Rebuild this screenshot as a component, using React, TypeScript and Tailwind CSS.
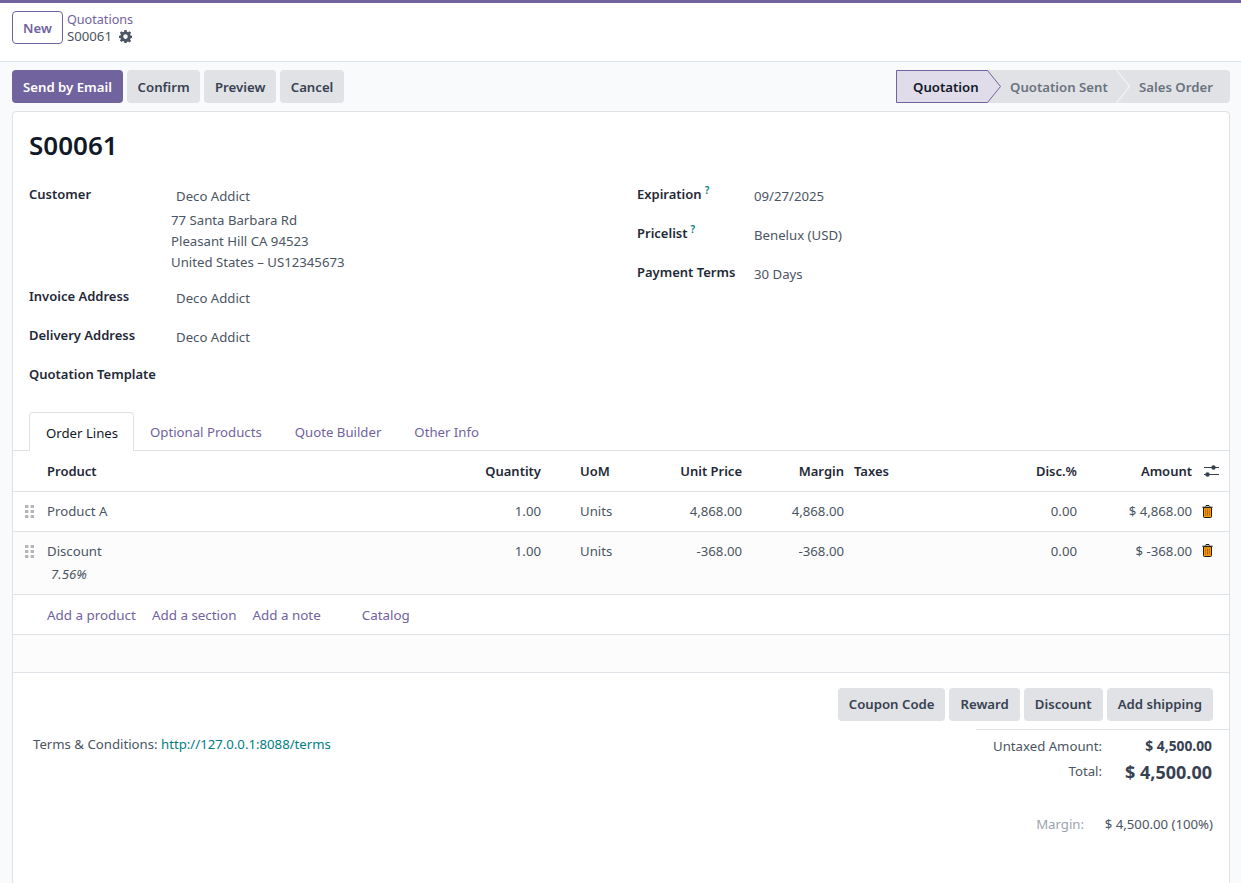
import React from "react";

const F = '[font-family:"Noto_Sans",sans-serif]';

function Btn({ children, primary, tight }: { children: React.ReactNode; primary?: boolean; tight?: boolean }) {
  return (
    <button
      className={`h-[33px] pt-[2px] rounded font-semibold text-[13.2px] ${tight ? "px-[10.7px]" : "px-[11px]"} ${
        primary ? "bg-[#71639e] text-white" : "bg-[#e0e2e6] text-[#374151]"
      }`}
    >
      {children}
    </button>
  );
}

function Field({ label, help, children, h }: { label: string; help?: boolean; children?: React.ReactNode; h: string }) {
  return (
    <div className={`flex ${h}`}>
      <div className="w-[143px] shrink-0 pt-[3px] font-semibold text-[13px] text-[#1f2937] leading-[20px] whitespace-nowrap">
        {label}
        {help && <sup className="ml-[3px] text-[#017e84] font-semibold text-[10px]">?</sup>}
      </div>
      <div className="pl-[4px] pt-[5px] leading-[20px] text-[#4b5563]">{children}</div>
    </div>
  );
}

function Grip() {
  return (
    <svg width="10" height="13" viewBox="0 0 10 13" className="ml-[12px] fill-[#b4b6ba]">
      <rect x="0" y="0" width="3.4" height="3" />
      <rect x="5.6" y="0" width="3.4" height="3" />
      <rect x="0" y="5" width="3.4" height="3" />
      <rect x="5.6" y="5" width="3.4" height="3" />
      <rect x="0" y="10" width="3.4" height="3" />
      <rect x="5.6" y="10" width="3.4" height="3" />
    </svg>
  );
}

function Trash() {
  return (
    <svg width="11" height="13" viewBox="0 0 11 13" className="ml-[10px]">
      <path d="M3.5 1.5 L4 .5 H7 L7.5 1.5 M.3 2.2 H10.7" fill="none" stroke="#1a1a1a" strokeWidth="1" />
      <path d="M1.5 2.6 H9.5 V11.6 Q9.5 12.5 8.6 12.5 H2.4 Q1.5 12.5 1.5 11.6 Z" fill="#f59e0b" stroke="#1a1a1a" strokeWidth="1" />
      <path d="M3.7 4.5 V10.8 M5.5 4.5 V10.8 M7.3 4.5 V10.8" stroke="#b45309" strokeWidth=".8" />
    </svg>
  );
}

function Sliders() {
  return (
    <svg width="15" height="12" viewBox="0 0 15 12" className="ml-[12px]">
      <path d="M0 2.5 H15 M0 9.5 H15" stroke="#374151" strokeWidth="1" />
      <circle cx="9.5" cy="2.5" r="2.2" fill="#374151" />
      <circle cx="3.5" cy="9.5" r="2.2" fill="#374151" />
    </svg>
  );
}

function Gear() {
  return (
    <svg width="13" height="13" viewBox="0 0 24 24" className="ml-[7px]">
      <path
        fill="#4b5563"
        fillRule="evenodd"
        d="M10 0h4l.6 3.2 2.2.9L19.5 2.3l2.8 2.8-1.8 2.7.9 2.2L24 10.6v4l-2.6.6-.9 2.2 1.8 2.7-2.8 2.8-2.7-1.8-2.2.9L14 24h-4l-.6-2.6-2.2-.9-2.7 1.8-2.8-2.8 1.8-2.7-.9-2.2L0 14.6v-4l2.6-.6.9-2.2L1.7 5.1l2.8-2.8 2.7 1.8 2.2-.9zM12 8a4.2 4.2 0 1 0 0 8.4A4.2 4.2 0 0 0 12 8z"
      />
    </svg>
  );
}

const thR = "pt-[2px] text-right font-semibold text-[13px] text-[#1f2937]";
const thL = "pt-[2px] text-left font-semibold text-[13px] text-[#1f2937]";
const row1R = "pt-[2px] text-right text-[#4b5563]";
const row2R = "pt-[9px] leading-[20px] text-right text-[#4b5563]";

export default function App() {
  return (
    <div className={`${F} relative text-[13.2px] h-[883px] overflow-hidden bg-[#f9fafb] text-[#374151] border-t-[3px] border-[#71639e]`}>
      <div className="absolute -top-[1px] left-0 w-[91px] h-[1px] bg-[#b8b1cf]"></div>
      <header className="h-[59px] bg-white border-b border-[#dee2e6] flex items-start pl-[12px] pt-[8px]">
        <button className="w-[51px] h-[33px] pt-[2px] rounded border border-[#71639e] text-[#71639e] font-semibold">New</button>
        <div className="ml-[4px]">
          <div className="text-[#71639e] text-[12.6px] leading-[17px]">Quotations</div>
          <div className="flex items-center leading-[17px] text-[#4b5563]">
            S00061
            <Gear />
          </div>
        </div>
      </header>

      <div className="flex items-start justify-between pl-[12px] pr-[11px] pt-[8px] h-[49px]">
        <div className="flex gap-[4px]">
          <Btn primary>Send by Email</Btn>
          <Btn tight>Confirm</Btn>
          <Btn tight>Preview</Btn>
          <Btn tight>Cancel</Btn>
        </div>
        <div className="relative flex h-[33px] w-[334px] rounded-r-sm bg-[#e0e2e6] font-semibold">
          <div className="absolute left-0 top-0 h-[33px] w-[108px]">
            <svg width="108" height="33" viewBox="0 0 108 33">
              <path d="M.5 .5 H91.5 L104.5 16.5 L91.5 32.5 H.5 Z" fill="#e0dcea" stroke="#71639e" />
            </svg>
          </div>
          <svg width="17" height="33" viewBox="0 0 17 33" className="absolute left-[220px] top-0">
            <path d="M.5 0 L13.5 16.5 L.5 33" fill="none" stroke="#f3f4f6" strokeWidth="1.2" />
          </svg>
          <span className="relative w-[114px] pl-[17px] leading-[35px] text-[#111827]">Quotation</span>
          <span className="relative w-[129px] leading-[35px] text-[#6b7280]">Quotation Sent</span>
          <span className="relative leading-[35px] text-[#6b7280]">Sales Order</span>
        </div>
      </div>

      <main className="ml-[12px] mr-[11px] h-[790px] bg-white border border-[#dee2e6] rounded-t">
        <h1 className="pl-[16px] pt-[13px] h-[69px] text-[26px] font-semibold leading-[40px] text-[#111827]">S00061</h1>

        <div className="flex h-[231px] pl-[16px]">
          <div className="w-[608px]">
            <div className="h-[102px]">
              <Field label="Customer" h="h-[29px]">Deco Addict</Field>
              <div className="leading-[21px] text-[#4b5563] pl-[142px]">
                <div>77 Santa Barbara Rd</div>
                <div>Pleasant Hill CA 94523</div>
                <div>United States – US12345673</div>
              </div>
            </div>
            <Field label="Invoice Address" h="h-[39px]">Deco Addict</Field>
            <Field label="Delivery Address" h="h-[39px]">Deco Addict</Field>
            <Field label="Quotation Template" h="h-[39px]" />
          </div>
          <div className="w-[500px] [&_div.w-\[143px\]]:w-[113px]">
            <Field label="Expiration" help h="h-[39px]">09/27/2025</Field>
            <Field label="Pricelist" help h="h-[39px]">Benelux (USD)</Field>
            <Field label="Payment Terms" h="h-[39px]">30 Days</Field>
          </div>
        </div>

        <nav className="flex h-[39px] border-b border-[#dee2e6] pl-[16px]">
          <div className="h-[39px] w-[105px] pl-[16px] leading-[40px] border border-b-0 border-[#dee2e6] bg-white rounded-t text-[#111827] whitespace-nowrap">Order Lines</div>
          <div className="pl-[16px] leading-[40px] text-[#71639e]">Optional Products</div>
          <div className="pl-[33px] leading-[40px] text-[#71639e]">Quote Builder</div>
          <div className="pl-[33px] leading-[40px] text-[#71639e]">Other Info</div>
        </nav>

        <table className="w-full table-fixed border-collapse">
          <colgroup>
            <col className="w-[34px]" />
            <col className="w-[423px]" />
            <col className="w-[71px]" />
            <col className="w-[99px]" />
            <col className="w-[102px]" />
            <col className="w-[102px]" />
            <col className="w-[133px]" />
            <col className="w-[100px]" />
            <col className="w-[115px]" />
            <col className="w-[37px]" />
          </colgroup>
          <thead>
            <tr className="h-[40px] border-b border-[#dee2e6]">
              <th></th>
              <th className={thL}>Product</th>
              <th className={thR}>Quantity</th>
              <th className={`${thL} pl-[39px]`}>UoM</th>
              <th className={thR}>Unit Price</th>
              <th className={thR}>Margin</th>
              <th className={`${thL} pl-[10px]`}>Taxes</th>
              <th className={thR}>Disc.%</th>
              <th className={thR}>Amount</th>
              <th><Sliders /></th>
            </tr>
          </thead>
          <tbody>
            <tr className="h-[40px] border-b border-[#dee2e6]">
              <td><Grip /></td>
              <td className="pt-[2px] text-[#4b5563]">Product A</td>
              <td className={row1R}>1.00</td>
              <td className="pt-[2px] pl-[39px] text-[#4b5563]">Units</td>
              <td className={row1R}>4,868.00</td>
              <td className={row1R}>4,868.00</td>
              <td></td>
              <td className={row1R}>0.00</td>
              <td className={row1R}>$ 4,868.00</td>
              <td><Trash /></td>
            </tr>
            <tr className="h-[63px] border-b border-[#dee2e6] bg-[#fcfcfd] align-top">
              <td className="pt-[13px]"><Grip /></td>
              <td className="pt-[9px] text-[#4b5563] leading-[20px]">
                Discount
                <div className="pl-[4px] pt-[3px] italic">7.56%</div>
              </td>
              <td className={row2R}>1.00</td>
              <td className="pl-[39px] pt-[9px] leading-[20px] text-[#4b5563]">Units</td>
              <td className={row2R}>-368.00</td>
              <td className={row2R}>-368.00</td>
              <td></td>
              <td className={row2R}>0.00</td>
              <td className={row2R}>$ -368.00</td>
              <td className="pt-[12px]"><Trash /></td>
            </tr>
          </tbody>
        </table>

        <div className="flex items-center h-[40px] pt-[3px] pl-[34px] border-b border-[#dee2e6] text-[13.4px] text-[#71639e]">
          <span>Add a product</span>
          <span className="ml-[16px]">Add a section</span>
          <span className="ml-[16px]">Add a note</span>
          <span className="ml-[41px]">Catalog</span>
        </div>
        <div className="h-[38px] bg-[#fcfcfd] border-b border-[#dee2e6]"></div>

        <div className="flex justify-between">
          <div className="pl-[20px] pt-[62px] text-[#4b5563]">
            Terms &amp; Conditions: <span className="text-[#017e84]">http://127.0.0.1:8088/terms</span>
          </div>
          <div className="flex flex-col items-end">
            <div className="flex gap-[4px] pt-[15px] pr-[16px] h-[56px]">
              <Btn>Coupon Code</Btn>
              <Btn>Reward</Btn>
              <Btn>Discount</Btn>
              <Btn>Add shipping</Btn>
            </div>
            <div className="w-[253px] border-t border-[#dee2e6] pr-[17px] text-right">
              <div className="flex justify-end items-center h-[32px] pt-[2px] whitespace-nowrap">
                <span className="text-[#4b5563]">Untaxed Amount:</span>
                <span className="w-[110px] shrink-0 font-bold text-[13.8px] text-[#374151]">$ 4,500.00</span>
              </div>
              <div className="flex justify-end items-center h-[21px] whitespace-nowrap">
                <span className="text-[#4b5563]">Total:</span>
                <span className="w-[110px] shrink-0 font-bold text-[18px] text-[#374151]">$ 4,500.00</span>
              </div>
              <div className="flex justify-end items-center mt-[32px] -mr-[1px] whitespace-nowrap">
                <span className="text-[#9ca3af]">Margin:</span>
                <span className="w-[129px] shrink-0 text-[#4b5563]">$ 4,500.00 (100%)</span>
              </div>
            </div>
          </div>
        </div>
      </main>
    </div>
  );
}
